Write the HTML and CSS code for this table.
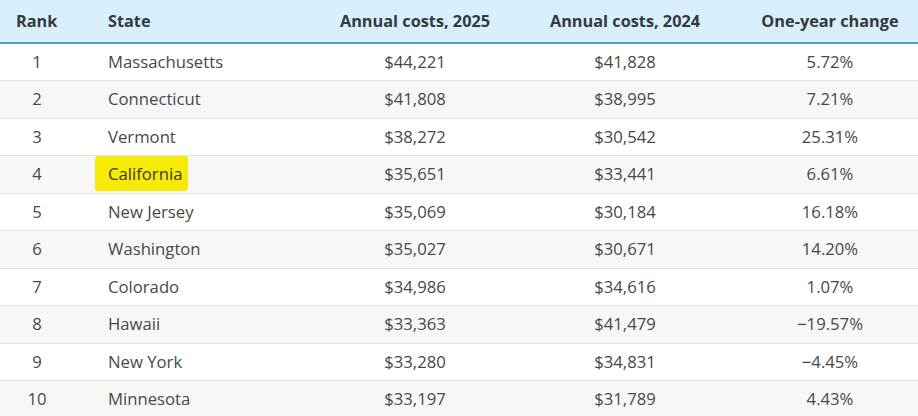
FILE: index.html
```html
<!DOCTYPE html>
<html>
<head>
<meta charset="utf-8">
<link rel="stylesheet" href="styles.css">
</head>
<body>
<table class="costs">
  <colgroup>
    <col class="c-rank"><col class="c-state"><col class="c-a25"><col class="c-a24"><col class="c-chg">
  </colgroup>
  <thead>
    <tr><th class="rank">Rank</th><th class="state">State</th><th>Annual costs, 2025</th><th>Annual costs, 2024</th><th class="chg">One-year change</th></tr>
  </thead>
  <tbody>
    <tr><td class="rank">1</td><td class="state">Massachusetts</td><td>$44,221</td><td>$41,828</td><td class="chg">5.72%</td></tr>
    <tr><td class="rank">2</td><td class="state">Connecticut</td><td>$41,808</td><td>$38,995</td><td class="chg">7.21%</td></tr>
    <tr><td class="rank">3</td><td class="state">Vermont</td><td>$38,272</td><td>$30,542</td><td class="chg">25.31%</td></tr>
    <tr><td class="rank">4</td><td class="state"><span class="hl">California</span></td><td>$35,651</td><td>$33,441</td><td class="chg">6.61%</td></tr>
    <tr><td class="rank">5</td><td class="state">New Jersey</td><td>$35,069</td><td>$30,184</td><td class="chg">16.18%</td></tr>
    <tr><td class="rank">6</td><td class="state">Washington</td><td>$35,027</td><td>$30,671</td><td class="chg">14.20%</td></tr>
    <tr><td class="rank">7</td><td class="state">Colorado</td><td>$34,986</td><td>$34,616</td><td class="chg">1.07%</td></tr>
    <tr><td class="rank">8</td><td class="state">Hawaii</td><td>$33,363</td><td>$41,479</td><td class="chg">−19.57%</td></tr>
    <tr><td class="rank">9</td><td class="state">New York</td><td>$33,280</td><td>$34,831</td><td class="chg">−4.45%</td></tr>
    <tr><td class="rank">10</td><td class="state">Minnesota</td><td>$33,197</td><td>$31,789</td><td class="chg">4.43%</td></tr>
  </tbody>
</table>
</body>
</html>
```
FILE: styles.css
```css
html, body {
  margin: 0;
  padding: 0;
  background: #ffffff;
}
body {
  font-family: "Open Sans", "Liberation Sans", sans-serif;
  color: #484848;
  overflow: hidden;
}
.costs {
  width: 918px;
  border-collapse: collapse;
  table-layout: fixed;
}
.c-rank { width: 74px; }
.c-state { width: 236px; }
.c-a25 { width: 210px; }
.c-a24 { width: 210px; }
.c-chg { width: 188px; }
.costs thead tr {
  background: #daeffc;
  height: 43px;
  border-bottom: 2px solid #4aa1c2;
}
.costs th {
  font-size: 16.3px;
  font-weight: 700;
  color: #333a40;
  text-align: center;
  padding: 0 0 1px 0;
}
.costs th.rank { text-align: left; padding-left: 16px; }
.costs th.state { text-align: left; padding-left: 34px; }
.costs th.chg { padding-left: 12px; }
.costs tbody tr {
  height: 37.5px;
  border-bottom: 1px solid #e4e4e4;
}
.costs tbody tr:nth-child(even) { background: #f7f7f7; }
.costs td {
  font-size: 16.7px;
  text-align: center;
  padding: 0;
  line-height: 22px;
}
.costs td.state { text-align: left; padding-left: 34px; }
.costs td.chg { padding-left: 12px; }
.hl {
  background: #f7ea06;
  padding: 6px 6px 6px 13px;
  margin-left: -13px;
  border-radius: 3px;
  color: #3a3a20;
}
```
